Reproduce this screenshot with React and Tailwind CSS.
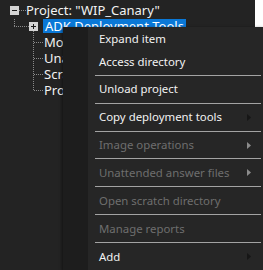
import React from "react";

const font = { fontFamily: '"Noto Sans", "Open Sans", sans-serif' };

function Arrow({ enabled }) {
  return (
    <svg width="4" height="7" viewBox="0 0 4 7" className="shrink-0">
      <path d="M0 0 L4 3.5 L0 7 Z" fill={enabled ? "#161616" : "#8c8c8c"} />
    </svg>
  );
}

function Item({ label, disabled, sub, h = "h-[27px]" }) {
  return (
    <div className={`flex items-center justify-between ${h} pl-[11px] pr-[13px]`}>
      <span className={disabled ? "text-[#6e6e6e]" : "text-[#f2f2f2]"}>{label}</span>
      {sub && <Arrow enabled={!disabled} />}
    </div>
  );
}

function Sep() {
  return <div className="h-[1px] ml-[7px] mr-[3px] bg-[#a3a3a3]" />;
}

export default function App() {
  return (
    <div className="relative flex w-[263px] h-[270px] overflow-hidden bg-white text-[13px] leading-[16px]" style={font}>
      <div className="relative w-[255px] h-full bg-[#232323] text-[#f2f2f2] pt-[2px]">
        <svg className="absolute left-0 top-0" width="60" height="100" viewBox="0 0 60 100">
          <g stroke="#8a8a8a" strokeWidth="1" strokeDasharray="1 1" shapeRendering="crispEdges">
            <line x1="19" y1="10.5" x2="26" y2="10.5" />
            <line x1="14.5" y1="19" x2="14.5" y2="26" />
            <line x1="14" y1="26.5" x2="29" y2="26.5" />
            <line x1="33.5" y1="31" x2="33.5" y2="90" />
            <line x1="34" y1="42.5" x2="43" y2="42.5" />
            <line x1="34" y1="58.5" x2="43" y2="58.5" />
            <line x1="34" y1="74.5" x2="43" y2="74.5" />
            <line x1="34" y1="90.5" x2="43" y2="90.5" />
          </g>
        </svg>
        <div className="flex items-center h-[16px] pl-[10px]">
          <svg width="9" height="9" viewBox="0 0 9 9" className="shrink-0">
            <rect x="0" y="0" width="9" height="9" fill="#d4d4d4" />
            <rect x="2" y="4" width="5" height="1" fill="#1a1a1a" />
          </svg>
          <span className="ml-[7px] whitespace-nowrap">Project: "WIP_Canary"</span>
        </div>
        <div className="flex items-center h-[16px] pl-[29px]">
          <svg width="9" height="9" viewBox="0 0 9 9" className="shrink-0">
            <rect x="0" y="0" width="9" height="9" fill="#d4d4d4" />
            <rect x="2" y="4" width="5" height="1" fill="#1a1a1a" />
            <rect x="4" y="2" width="1" height="5" fill="#1a1a1a" />
          </svg>
          <span className="ml-[5px] px-[2px] h-[14px] leading-[14px] bg-[#0a78d7] text-white whitespace-nowrap">ADK Deployment Tools</span>
        </div>
        <div className="h-[16px] pl-[44px]">Mount</div>
        <div className="h-[16px] pl-[44px]">Unattended</div>
        <div className="h-[16px] pl-[44px]">Scratch</div>
        <div className="h-[16px] pl-[44px]">Project</div>
      </div>
      <div className="flex-1 bg-white" />

      <div className="absolute left-[63px] top-[27px] w-[201px] bottom-0 flex bg-[#262626] text-[11.4px] shadow-[-1px_1px_3px_rgba(0,0,0,0.5)]">
        <div className="w-[25px] bg-[#1d1d1d]" />
        <div className="flex-1 flex flex-col pt-[1px] leading-[16px]">
          <Item label="Expand item" h="h-[23px]" />
          <Item label="Access directory" h="h-[23px]" />
          <div className="mt-[1px]" />
          <Sep />
          <Item label="Unload project" />
          <Sep />
          <Item label="Copy deployment tools" sub />
          <Sep />
          <Item label="Image operations" sub disabled />
          <Sep />
          <Item label="Unattended answer files" sub disabled />
          <Sep />
          <Item label="Open scratch directory" disabled />
          <Sep />
          <Item label="Manage reports" disabled />
          <Sep />
          <Item label="Add" sub />
        </div>
      </div>
    </div>
  );
}
